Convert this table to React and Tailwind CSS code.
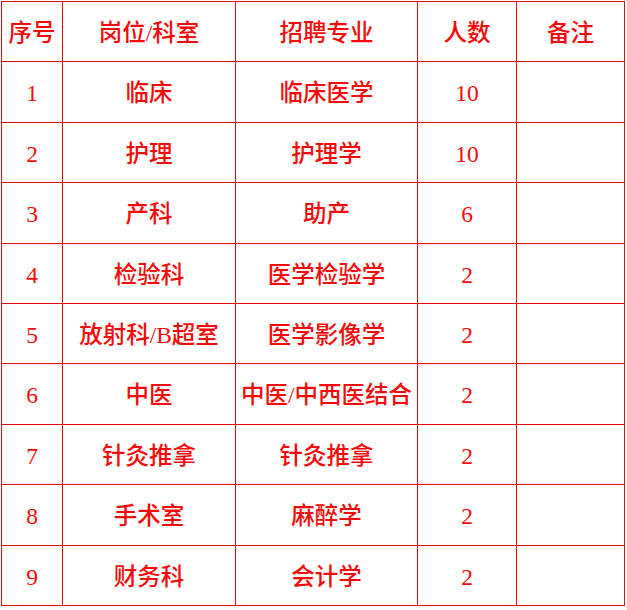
import React from 'react';

const HEAD = ['序号', '岗位/科室', '招聘专业', '人数', '备注'];

const ROWS = [
    ['1', '临床', '临床医学', '10', ''],
    ['2', '护理', '护理学', '10', ''],
    ['3', '产科', '助产', '6', ''],
    ['4', '检验科', '医学检验学', '2', ''],
    ['5', '放射科/B超室', '医学影像学', '2', ''],
    ['6', '中医', '中医/中西医结合', '2', ''],
    ['7', '针灸推拿', '针灸推拿', '2', ''],
    ['8', '手术室', '麻醉学', '2', ''],
    ['9', '财务科', '会计学', '2', ''],
];

const App = () => {
    return (
        <div className="min-h-screen bg-white pt-px pl-px">
            <div
                className="grid w-[624px] grid-cols-[60px_172px_181px_98px_107px] auto-rows-[59.4px] gap-px bg-[#e00a0a] p-px text-[23.5px] font-medium text-[#f50a0a]"
                style={{ fontFamily: '"Liberation Serif", "Noto Sans CJK SC", serif' }}
            >
                {HEAD.map(h => (
                    <div key={h} className="flex items-center justify-center bg-white pt-[4px] whitespace-nowrap">
                        {h}
                    </div>
                ))}
                {ROWS.map(row =>
                    row.map((cell, i) => (
                        <div key={`${row[0]}-${i}`} className="flex items-center justify-center bg-white pt-[4px] whitespace-nowrap">
                            {cell}
                        </div>
                    ))
                )}
            </div>
        </div>
    );
};

export default App;
